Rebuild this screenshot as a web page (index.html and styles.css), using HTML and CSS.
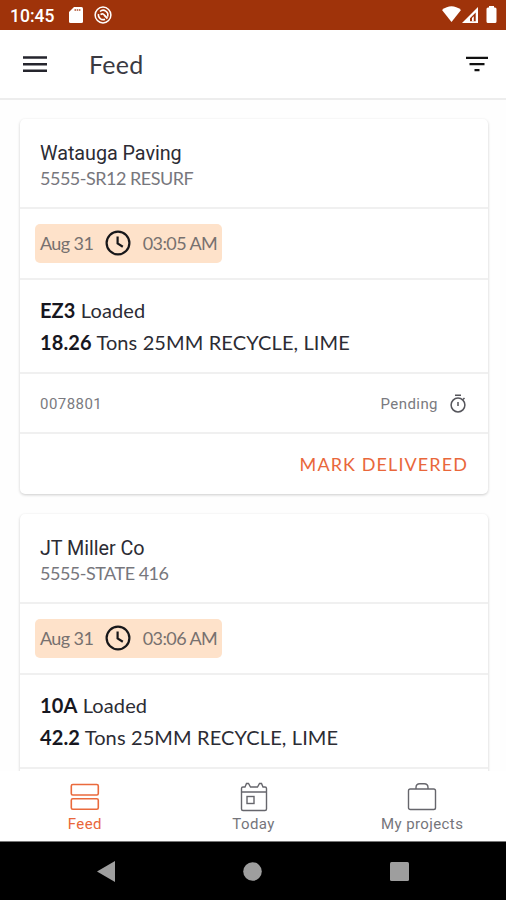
FILE: index.html
```html
<!DOCTYPE html>
<html lang="en">
<head>
<meta charset="utf-8">
<title>Feed</title>
<link rel="stylesheet" href="styles.css">
</head>
<body>
<div class="screen">
  <div class="status">
    <span class="clock">10:45</span>
    <svg class="sd" width="14" height="16" viewBox="0 0 14 16"><path fill="#fff" d="M5 0h7.500q1.500 0 1.500 1.500v13q0 1.500-1.500 1.500h-11q-1.500 0-1.500-1.500V5z"/><path stroke="#9f330a" stroke-opacity=".65" stroke-width="2" stroke-dasharray="1.500 .7" d="M5.500 3h6"/></svg>
    <svg class="sync" width="18" height="18" viewBox="0 0 18 18" fill="none" stroke="#fff"><circle cx="9" cy="9" r="7.900" stroke-width="1.500"/><path stroke-width="1.600" d="M11 13.200A4.700 4.700 0 0 1 4.500 8M6 5.500a4.700 4.700 0 0 1 7.500 5.200"/><path stroke-width="1.800" d="M6.500 8.500q3-1.500 4 1l3 3"/></svg>
    <span class="grow"></span>
    <svg width="56" height="18" viewBox="0 0 56 18" fill="#fff"><path d="M0 4Q9.500-3.500 19 4L9.500 16z"/><path fill-rule="evenodd" d="M20 17L36 1v16zM28 15.300h5.700V6.500L28 12.200z"/><path d="M30 15.300h1.800v-5l-1.800 1.800z"/><path d="M47 1.500V0h5v1.500h1q1.500 0 1.500 1.500v12.500q0 1.500-1.500 1.500h-7q-1.500 0-1.500-1.500V3q0-1.500 1.500-1.500z"/></svg>
  </div>
  <header class="bar">
    <svg width="24" height="18" viewBox="0 0 24 18"><path stroke="#25252d" stroke-width="2.600" d="M0 2.500h24M0 9.200h24M0 15.700h24"/></svg>
    <h1>Feed</h1>
    <span class="grow"></span>
    <svg width="22" height="16" viewBox="0 0 22 16"><path stroke="#111" stroke-width="2.300" d="M0 1.800h22M3.500 8.200h15M8.500 14.200h5"/></svg>
  </header>
  <main class="feed">
    <article class="card">
      <section class="customer"><h2>Watauga Paving</h2><p>5555-SR12 RESURF</p></section>
      <section class="when"><div class="chip"><span>Aug 31</span><svg width="26" height="26" viewBox="0 0 26 26" fill="none" stroke="#17171a" stroke-width="2.200"><circle cx="13" cy="13" r="11.400"/><path d="M12.600 6.500v7l5.200 3.200"/></svg><span class="time">03:05 AM</span></div></section>
      <section class="load"><p class="truck"><b>EZ3</b> Loaded</p><p class="tons"><b>18.26</b> Tons 25MM RECYCLE, LIME</p></section>
      <section class="ticket"><span class="num">0078801</span><span class="grow"></span><span class="pending">Pending</span><svg width="16" height="19" viewBox="0 0 16 19" fill="none" stroke="#55555b" stroke-width="1.500"><circle cx="8" cy="11" r="6.900"/><path d="M5 1.200h6M13 5.500l1.500-1.500M8 8v4"/></svg></section>
      <section class="action"><span>MARK DELIVERED</span></section>
    </article>
    <article class="card">
      <section class="customer"><h2>JT Miller Co</h2><p>5555-STATE 416</p></section>
      <section class="when"><div class="chip"><span>Aug 31</span><svg width="26" height="26" viewBox="0 0 26 26" fill="none" stroke="#17171a" stroke-width="2.200"><circle cx="13" cy="13" r="11.400"/><path d="M12.600 6.500v7l5.200 3.200"/></svg><span class="time">03:06 AM</span></div></section>
      <section class="load"><p class="truck"><b>10A</b> Loaded</p><p class="tons"><b>42.2</b> Tons 25MM RECYCLE, LIME</p></section>
      <section class="ticket"></section>
    </article>
  </main>
  <nav class="tabs">
    <div class="tab active"><svg width="30" height="30" viewBox="0 0 30 30" fill="none" stroke="#ea6a3c" stroke-width="1.600"><rect x="1.300" y="2.500" width="27" height="10.500" rx="1.500"/><rect x="1.300" y="16.700" width="27" height="10.500" rx="1.500"/></svg><span>Feed</span></div>
    <div class="tab"><svg width="30" height="30" viewBox="0 0 30 30" fill="none" stroke="#66666c" stroke-width="1.400"><path d="M4 5h2l1.500-3.500h2L11.500 5h7l2-3.500h2L24 5h2q1.500 0 1.500 1.500V27q0 1.500-1.500 1.500H4Q2.500 28.500 2.500 27V6.500Q2.500 5 4 5zM2.500 10h25"/><rect x="8" y="14.500" width="7" height="7"/></svg><span>Today</span></div>
    <div class="tab"><svg width="30" height="30" viewBox="0 0 30 30" fill="none" stroke="#66666c" stroke-width="1.400"><rect x="1.500" y="7" width="27" height="20.500" rx="1.800"/><path d="M9 7V5.500q0-3.800 3.800-3.800h4.400Q21 1.700 21 5.500V7"/></svg><span>My projects</span></div>
  </nav>
  <div class="system">
    <svg width="18" height="21" viewBox="0 0 18 21"><path fill="#9e9e9e" d="M0 10.500L18 0v21z"/></svg>
    <svg width="19" height="19" viewBox="0 0 19 19"><circle fill="#9e9e9e" cx="9.500" cy="9.500" r="9.300"/></svg>
    <svg width="19" height="19" viewBox="0 0 19 19"><rect fill="#9e9e9e" width="19" height="19" rx="1.500"/></svg>
  </div>
</div>
</body>
</html>
```

FILE: styles.css
```css
* { box-sizing: border-box; }
body, h1, h2, p { margin: 0; font-weight: 400; }
body { font-family: Lato, sans-serif; background: #fff; color: #2c2c34; }
.screen { height: 900px; width: 506px; display: flex; flex-direction: column; overflow: hidden; }
.grow { flex: 1; }
svg { display: block; flex: none; }
.status { height: 30px; flex: none; background: #9f330a; display: flex; align-items: center; padding: 0 8px 0 10px; }
.clock { font: 500 17.5px/30px Roboto, sans-serif; color: #fff; width: 59px; padding-top: 2px; }
.sync { margin-left: 11px; }
.bar { height: 70px; flex: none; display: flex; align-items: center; padding: 0 18px 0 23px; border-bottom: 2px solid #ededed; }
.bar h1 { font: 400 25px/34px Lato, sans-serif; margin-left: 42px; color: #3a3a42; letter-spacing: .3px; }
.feed { flex: 1; min-height: 0; overflow: hidden; padding: 19px 18px 0 20px; display: flex; flex-direction: column; gap: 20px; background: #fefefe; }
.card { flex: none; border-radius: 5px; background: #fff; box-shadow: 0 1px 3px rgba(0,0,0,.2); }
.card section { border-bottom: 2px solid #f0f0f0; padding: 0 20px; }
.card section.action { border-bottom: 0; }
.customer { height: 90px; }
.customer h2 { font: 400 19.8px/25px Roboto, sans-serif; padding-top: 22px; letter-spacing: -.05px; }
.customer p { font-size: 18px; line-height: 24px; color: #77777d; letter-spacing: -.5px; }
.card .when { height: 71px; display: flex; align-items: center; padding: 0 15px; }
.chip { height: 39px; width: 187px; border-radius: 5px; background: #fee2ca; display: flex; align-items: center; padding: 0 5px 1px; color: #77716f; font-size: 18px; letter-spacing: -.6px; }
.chip svg { margin: 0 12px 0 11.500px; }
.chip span { white-space: nowrap; }
.load { height: 94px; font-size: 20px; line-height: 32px; letter-spacing: .12px; white-space: nowrap; }
.load .truck { padding-top: 13.500px; }
.load b { font-weight: 700; color: #17171f; }
.ticket { height: 60px; display: flex; align-items: center; font: 400 15px/20px Roboto, sans-serif; color: #7a7a80; letter-spacing: .45px; }
.ticket span { padding-top: 2px; }
.ticket svg { margin-right: 2px; }
.pending { margin-right: 12px; }
.action { height: 60px; display: flex; align-items: center; justify-content: flex-end; color: #e9673b; font-size: 18px; letter-spacing: 1.1px; }
.tabs { height: 70px; flex: none; display: flex; background: #fff; }
.tab { flex: 1; display: flex; flex-direction: column; align-items: center; padding: 11px 0 0 1px; font: 400 15px/22px Roboto, sans-serif; letter-spacing: .4px; color: #75757b; }
.tab span { padding-top: 1px; }
.tab.active { color: #e9673b; }
.system { height: 59px; flex: none; background: #000; display: flex; justify-content: space-between; align-items: center; padding: 0 97px; border-top: 1px solid #777; }
```
